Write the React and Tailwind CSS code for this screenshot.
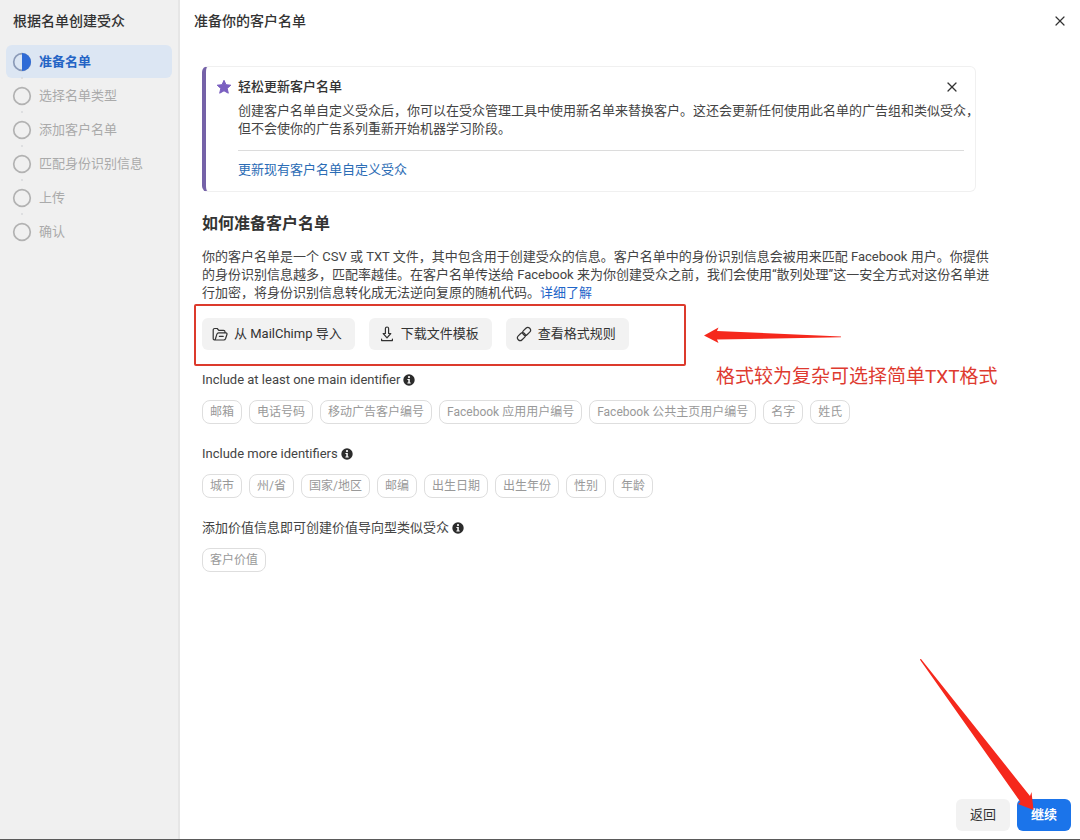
import React from "react";
import { X } from "lucide-react";

const STEPS = ["准备名单", "选择名单类型", "添加客户名单", "匹配身份识别信息", "上传", "确认"];

const GROUPS = [
  {
    label: "Include at least one main identifier",
    tags: ["邮箱", "电话号码", "移动广告客户编号", "Facebook 应用用户编号", "Facebook 公共主页用户编号", "名字", "姓氏"],
  },
  {
    label: "Include more identifiers",
    tags: ["城市", "州/省", "国家/地区", "邮编", "出生日期", "出生年份", "性别", "年龄"],
  },
  {
    label: "添加价值信息即可创建价值导向型类似受众",
    tags: ["客户价值"],
  },
];

function StepIcon({ active }) {
  return (
    <svg width="20" height="20" viewBox="0 0 20 20" fill="none" aria-hidden="true" className="shrink-0">
      <circle cx="10" cy="10" r="8.3" stroke={active ? "#8c9bb8" : "#b2b2b2"} strokeWidth="1.7" />
      {active && <path d="M10 1a9 9 0 0 1 0 18z" fill="#2f6bd6" />}
    </svg>
  );
}

function StarIcon() {
  return (
    <svg width="16" height="16" viewBox="0 0 16 16" aria-hidden="true" className="shrink-0">
      <path
        d="M8 1.3l2 4.4 4.8.5-3.6 3.2 1.1 4.8L8 11.8l-4.3 2.4 1.1-4.8L1.2 6.2 6 5.7z"
        fill="#7a5fc0"
        stroke="#7a5fc0"
        strokeWidth="1"
        strokeLinejoin="round"
      />
    </svg>
  );
}

function FolderIcon() {
  return (
    <svg width="16" height="16" viewBox="0 0 16 16" fill="none" stroke="#333" strokeWidth="1.2" strokeLinecap="round" strokeLinejoin="round" aria-hidden="true">
      <path d="M3 14h8.800a1.800 1.800 0 0 0 1.700-1.200l1.500-4.600a1 1 0 0 0-1-1.300H6.600a1.800 1.800 0 0 0-1.700 1.200L3.400 13a1.100 1.100 0 0 1-2.200-.3V4a1.500 1.500 0 0 1 1.500-1.500h2.500l1.600 1.800h4.700A1.500 1.500 0 0 1 13 5.800v1" />
      <path d="M7.400 10.400h3.800" />
    </svg>
  );
}

function DownloadIcon() {
  return (
    <svg width="16" height="16" viewBox="0 0 16 16" fill="none" stroke="#333" strokeWidth="1.2" strokeLinecap="round" strokeLinejoin="round" aria-hidden="true">
      <path d="M6.400 2.600a1.600 1.600 0 0 1 3.200 0v4.900h2.200L8 11.800 4.200 7.500h2.200z" />
      <path d="M2.600 13v1.600h10.800V13" />
    </svg>
  );
}

function LinkIcon() {
  return (
    <svg width="16" height="16" viewBox="0 0 16 16" fill="none" stroke="#333" strokeWidth="1.2" strokeLinecap="round" aria-hidden="true">
      <rect x="-4.4" y="-2.7" width="8.8" height="5.4" rx="2.7" transform="translate(10.6 5.4) rotate(-45)" />
      <rect x="-4.4" y="-2.7" width="8.8" height="5.4" rx="2.7" transform="translate(5.4 10.6) rotate(-45)" />
    </svg>
  );
}

function InfoIcon() {
  return (
    <svg width="12" height="12" viewBox="0 0 12 12" aria-hidden="true" className="shrink-0">
      <circle cx="6" cy="6" r="5.7" fill="#2b2b2b" />
      <circle cx="6" cy="3.1" r="1.1" fill="#fff" />
      <path d="M4.400 5h2.400v3.400h.9v1.100H4.400V8.400h.9V6.100h-.9z" fill="#fff" />
    </svg>
  );
}

const ACTIONS = [
  { text: "从 MailChimp 导入", Icon: FolderIcon },
  { text: "下载文件模板", Icon: DownloadIcon },
  { text: "查看格式规则", Icon: LinkIcon },
];

function Sidebar() {
  return (
    <aside className="w-[180px] shrink-0 bg-[#f0f0f0] border-r-2 border-[#e6e6e6] px-[6px]">
      <h1 className="h-[45px] pl-[7px] pt-[10px] text-[14px] leading-[22px] font-medium text-[#333]">根据名单创建受众</h1>
      <ol className="flex flex-col gap-px">
        {STEPS.map((step, i) => (
          <li
            key={step}
            aria-current={i === 0 ? "step" : undefined}
            className={
              i === 0
                ? "relative flex h-[33px] items-center gap-[7px] rounded-md bg-[#dce6f3] pl-[6px] text-[13px] font-bold text-[#2464c5]"
                : "relative flex h-[33px] items-center gap-[7px] pl-[6px] text-[13px] text-[#aaa]"
            }
          >
            <StepIcon active={i === 0} />
            {step}
            {i < STEPS.length - 1 && <span className="absolute left-[15px] -bottom-px size-[2px] rounded-full bg-[#d8dadd]" />}
          </li>
        ))}
      </ol>
    </aside>
  );
}

function Callout() {
  return (
    <section className="flex gap-[6px] rounded-md border border-[#f0f0f0] border-l-4 border-l-[#7562a8] pl-[10px] pt-[10px] pb-[11px]">
      <div className="pt-[2px]">
        <StarIcon />
      </div>
      <div className="min-w-0 flex-1">
        <div className="flex items-center justify-between pr-[15px]">
          <h3 className="text-[13px] leading-[20px] font-medium text-[#333]">轻松更新客户名单</h3>
          <button type="button" aria-label="关闭提示" className="text-[#333]">
            <X size={16} strokeWidth={1.8} />
          </button>
        </div>
        <p className="pt-[5px] text-[13px] leading-[18px] whitespace-nowrap text-[#444]">
          创建客户名单自定义受众后，你可以在受众管理工具中使用新名单来替换客户。这还会更新任何使用此名单的广告组和类似受众，
          <br />
          但不会使你的广告系列重新开始机器学习阶段。
        </p>
        <div className="mt-[12px] mr-[11px] border-t border-[#dcdcdc] pt-[9px]">
          <a href="#update" className="block w-fit text-[13px] leading-[20px] text-[#2b6cb5]">更新现有客户名单自定义受众</a>
        </div>
      </div>
    </section>
  );
}

export default function App() {
  return (
    <div className="flex min-h-screen border-b border-[#5a5a5a] bg-white font-[Roboto,'Noto_Sans_CJK_SC',sans-serif] text-[#444]">
      <Sidebar />

      <main className="flex min-w-0 flex-1 flex-col">
        <header className="flex h-[66px] items-start justify-between pl-[14px] pr-[12px] pt-[10px]">
          <h2 className="text-[14px] leading-[22px] font-medium text-[#333]">准备你的客户名单</h2>
          <button type="button" aria-label="关闭" className="pt-[3px] text-[#333]">
            <X size={16} strokeWidth={1.8} />
          </button>
        </header>

        <div className="flex-1 pl-[22px] pr-[80px]">
          <div className="mr-[24px]">
            <Callout />
          </div>

          <h2 className="mt-[20px] text-[16px] leading-[24px] font-bold text-[#333]">如何准备客户名单</h2>
          <p className="mt-[12px] text-[13px] leading-[18px]">
            你的客户名单是一个 CSV 或 TXT 文件，其中包含用于创建受众的信息。客户名单中的身份识别信息会被用来匹配 Facebook 用户。你提供
            <br />
            的身份识别信息越多，匹配率越佳。在客户名单传送给 Facebook 来为你创建受众之前，我们会使用“散列处理”这一安全方式对这份名单进
            <br />
            行加密，将身份识别信息转化成无法逆向复原的随机代码。
            <a href="#more" className="text-[#1f66c9]">详细了解</a>
          </p>

          <div className="relative mt-[16px] flex w-fit gap-[14px]">
            {ACTIONS.map(({ text, Icon }) => (
              <button
                key={text}
                type="button"
                className="flex h-[32px] items-center gap-[6px] rounded-md bg-[#f2f2f2] pl-[10px] pr-[13px] text-[13px] text-[#333]"
              >
                <Icon />
                {text}
              </button>
            ))}
            <div className="pointer-events-none absolute -left-[8px] -top-[14px] h-[62px] w-[492px] rounded-xs border-[2px] border-[#dc3a2c]" />
            <svg className="pointer-events-none absolute left-[502px] top-[8px]" width="138" height="18" viewBox="0 0 138 18" aria-hidden="true">
              <path d="M0 9.500L14.500 1.500L13 5L137 10.500L137 11.200L13 13.500L14.500 17z" fill="#f5281c" />
            </svg>
            <p className="absolute left-[514px] top-[46px] whitespace-nowrap text-[19px] leading-[26px] text-[#de3a2f]">
              格式较为复杂可选择简单TXT格式
            </p>
          </div>

          <div className="mt-[20px] flex flex-col gap-[20px]">
            {GROUPS.map((group) => (
              <section key={group.label}>
                <h3 className="flex items-center gap-[3px] text-[13px] leading-[20px] text-[#444]">
                  {group.label}
                  <InfoIcon />
                </h3>
                <ul className="mt-[10px] flex gap-[7px]">
                  {group.tags.map((tag) => (
                    <li key={tag} className="flex h-[24px] items-center whitespace-nowrap rounded-lg border border-[#dedede] px-[7px] text-[12px] text-[#999]">
                      {tag}
                    </li>
                  ))}
                </ul>
              </section>
            ))}
          </div>
        </div>

        <footer className="relative flex justify-end gap-[7px] pb-[8px] pr-[9px]">
          <button type="button" className="h-[32px] rounded-md bg-[#f2f2f2] px-[14px] text-[13px] text-[#333]">返回</button>
          <button type="button" className="h-[32px] rounded-md bg-[#1b74ea] px-[14px] text-[13px] font-bold text-white">继续</button>
          <svg className="pointer-events-none absolute bottom-[27px] right-[45px]" width="116" height="153" viewBox="0 0 116 153" aria-hidden="true">
            <path d="M2 0L111 137L112.500 133L114.500 151L99 145L101.500 143L1.500 1.500L1 0z" fill="#f5281c" />
          </svg>
        </footer>
      </main>
    </div>
  );
}
